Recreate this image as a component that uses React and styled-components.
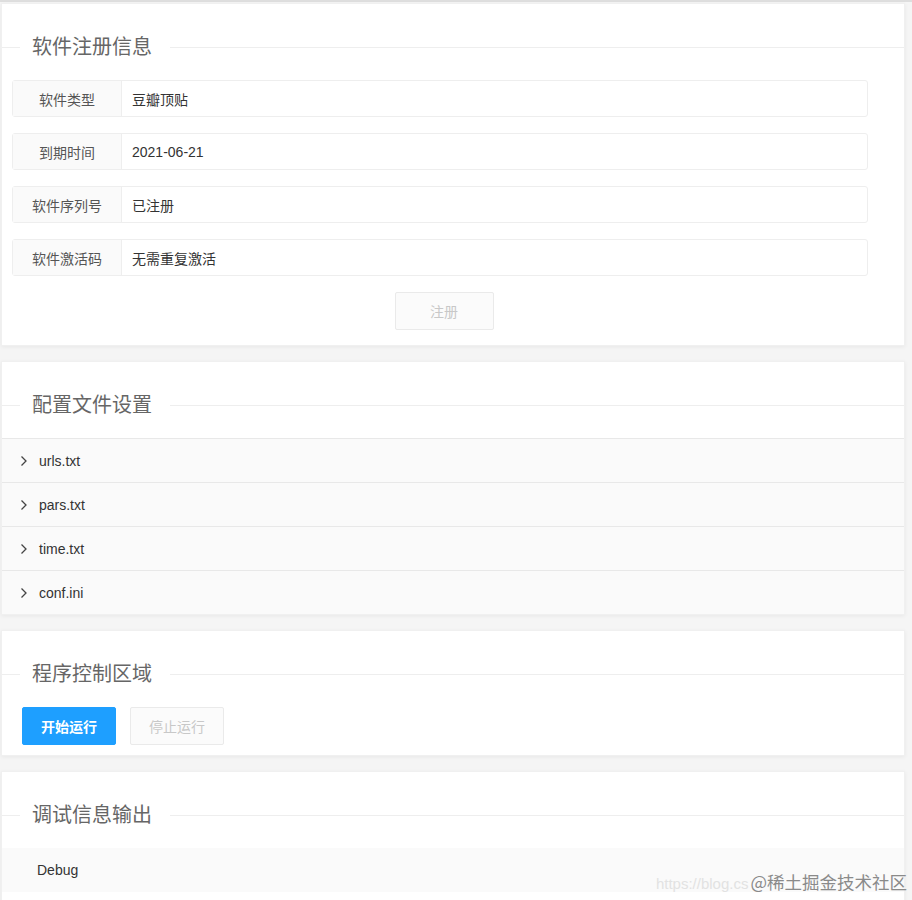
import React from "react";
import styled, { createGlobalStyle } from "styled-components";

const GlobalStyle = createGlobalStyle`
  html, body {
    margin: 0;
    padding: 0;
    background: #f5f5f5;
    font-family: "Liberation Sans", "Noto Sans CJK SC", sans-serif;
    color: #333;
  }
  * { box-sizing: border-box; }
`;

const Page = styled.div`
  position: relative;
  border-top: 2px solid #dedede;
  padding: 1px 7px 0 1px;
  display: flex;
  flex-direction: column;
  gap: 15px;
  min-height: 900px;
`;

const Card = styled.section`
  background: #fff;
  border: 1px solid #f0f0f0;
  box-shadow: 0 1px 4px rgba(0, 0, 0, 0.06);
  padding: ${(p) => p.$pad || "29px 0 15px"};
`;

const Divider = styled.div`
  display: flex;
  align-items: center;
  height: 28px;
  margin-bottom: 19px;

  &::before {
    content: "";
    width: 18px;
    border-top: 1px solid #eeeeee;
  }
  &::after {
    content: "";
    flex: 1;
    border-top: 1px solid #eeeeee;
  }
`;

const DividerTitle = styled.span`
  padding: 0 18px 0 12px;
  font-size: 20px;
  color: #666;
  line-height: 28px;
`;

const Rows = styled.div`
  display: flex;
  flex-direction: column;
  gap: 16px;
  padding: 0 36px 0 10px;
`;

const Row = styled.div`
  display: flex;
  height: 37px;
  border: 1px solid #eeeeee;
  border-radius: 3px;
  font-size: 14px;
`;

const Label = styled.div`
  width: 109px;
  background: #fafafa;
  border-right: 1px solid #eeeeee;
  display: flex;
  align-items: center;
  justify-content: center;
  color: #555;
`;

const Value = styled.div`
  flex: 1;
  display: flex;
  align-items: center;
  padding-left: 10px;
  color: #333;
`;

const Center = styled.div`
  display: flex;
  justify-content: center;
  padding-top: 16px;
  margin-right: 18px;
`;

const Button = styled.button`
  height: 38px;
  width: ${(p) => p.$w || "94px"};
  border-radius: 2px;
  font-family: inherit;
  font-size: 14px;
  font-weight: ${(p) => (p.$primary ? 600 : 400)};
  border: 1px solid ${(p) => (p.$primary ? "#1e9fff" : "#eaeaea")};
  background: ${(p) => (p.$primary ? "#1e9fff" : "#fbfbfb")};
  color: ${(p) => (p.$primary ? "#fff" : "#c8c8c8")};
  cursor: ${(p) => (p.disabled ? "not-allowed" : "pointer")};
`;

const Collapse = styled.div`
  border-top: 1px solid #e8e8e8;
`;

const Panel = styled.div`
  height: 44px;
  display: flex;
  align-items: center;
  gap: 11px;
  padding-left: 17px;
  background: #fafafa;
  border-bottom: 1px solid #e8e8e8;
  font-size: 14px;
  color: #333;
  &:last-child { border-bottom: none; height: 43px; }
`;

const ButtonBar = styled.div`
  display: flex;
  gap: 14px;
  padding-left: 20px;
`;

const DebugBox = styled.div`
  height: 44px;
  background: #fafafa;
  display: flex;
  align-items: center;
  padding-left: 35px;
  font-size: 14px;
  color: #333;
`;

const Watermark = styled.div`
  position: absolute;
  right: 5px;
  top: 867px;
  display: flex;
  align-items: baseline;
  pointer-events: none;
  white-space: nowrap;
`;

const WmUrl = styled.span`
  font-size: 15px;
  color: #e2e2e2;
  margin-right: 2px;
`;

const WmText = styled.span`
  font-family: "Noto Sans CJK SC", serif;
  font-size: 17.5px;
  color: #8a8a8a;
`;

const Chevron = () => (
  <svg width="9" height="12" viewBox="0 0 9 12">
    <polyline points="2.5,1.5 7,6 2.5,10.5" fill="none" stroke="#444" strokeWidth="1.3" />
  </svg>
);

const info = [
  ["软件类型", "豆瓣顶贴"],
  ["到期时间", "2021-06-21"],
  ["软件序列号", "已注册"],
  ["软件激活码", "无需重复激活"],
];

const files = ["urls.txt", "pars.txt", "time.txt", "conf.ini"];

export default function App() {
  return (
    <>
      <GlobalStyle />
      <Page>
        <Card>
          <Divider>
            <DividerTitle>软件注册信息</DividerTitle>
          </Divider>
          <Rows>
            {info.map(([k, v]) => (
              <Row key={k}>
                <Label>{k}</Label>
                <Value>{v}</Value>
              </Row>
            ))}
          </Rows>
          <Center>
            <Button $w="99px" disabled>注册</Button>
          </Center>
        </Card>

        <Card $pad="29px 0 0">
          <Divider>
            <DividerTitle>配置文件设置</DividerTitle>
          </Divider>
          <Collapse>
            {files.map((f) => (
              <Panel key={f}>
                <Chevron />
                {f}
              </Panel>
            ))}
          </Collapse>
        </Card>

        <Card $pad="29px 0 10px">
          <Divider>
            <DividerTitle>程序控制区域</DividerTitle>
          </Divider>
          <ButtonBar>
            <Button $primary>开始运行</Button>
            <Button disabled>停止运行</Button>
          </ButtonBar>
        </Card>

        <Card $pad="29px 0 20px">
          <Divider>
            <DividerTitle>调试信息输出</DividerTitle>
          </Divider>
          <DebugBox>Debug</DebugBox>
        </Card>

        <Watermark>
          <WmUrl>https://blog.cs</WmUrl>
          <WmText>@稀土掘金技术社区</WmText>
        </Watermark>
      </Page>
    </>
  );
}
